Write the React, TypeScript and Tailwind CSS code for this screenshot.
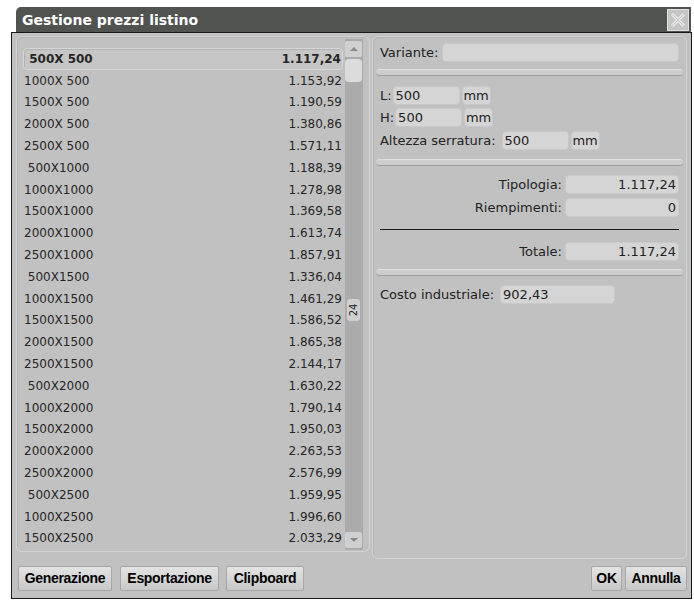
import React from 'react';

const rows: [string, string][] = [
  [' 500X 500', '1.117,24'],
  ['1000X 500', '1.153,92'],
  ['1500X 500', '1.190,59'],
  ['2000X 500', '1.380,86'],
  ['2500X 500', '1.571,11'],
  [' 500X1000', '1.188,39'],
  ['1000X1000', '1.278,98'],
  ['1500X1000', '1.369,58'],
  ['2000X1000', '1.613,74'],
  ['2500X1000', '1.857,91'],
  [' 500X1500', '1.336,04'],
  ['1000X1500', '1.461,29'],
  ['1500X1500', '1.586,52'],
  ['2000X1500', '1.865,38'],
  ['2500X1500', '2.144,17'],
  [' 500X2000', '1.630,22'],
  ['1000X2000', '1.790,14'],
  ['1500X2000', '1.950,03'],
  ['2000X2000', '2.263,53'],
  ['2500X2000', '2.576,99'],
  [' 500X2500', '1.959,95'],
  ['1000X2500', '1.996,60'],
  ['1500X2500', '2.033,29'],
];

function Field({ className = '', children }: { className?: string; children?: React.ReactNode }) {
  return (
    <div className={`h-[19px] rounded-[4px] bg-[#d5d5d5] border border-[#c9c9c9] flex items-center px-[2px] text-[12px] text-[#222] ${className}`}>
      {children}
    </div>
  );
}

function Separator() {
  return (
    <div className="h-[7px] mx-[3px] rounded-full bg-[#cdcdcd] border-t border-[#e0e0e0] border-b border-b-[#9e9e9e]" />
  );
}

function Button({ label, className = '' }: { label: string; className?: string }) {
  return (
    <div
      className={`h-[25px] flex items-center justify-center rounded-[2px] border border-[#a8a8a8] bg-gradient-to-b from-[#e4e4e4] to-[#c8c8c8] text-[14px] font-bold text-black tracking-[-0.3px] ${className}`}
      style={{ fontFamily: '"Liberation Sans", Arial, sans-serif' }}
    >
      {label}
    </div>
  );
}

export default function App() {
  return (
    <div
      className="w-[694px] h-[600px] bg-white pt-[7px] overflow-hidden"
      style={{ fontFamily: '"DejaVu Sans", Verdana, sans-serif' }}
    >
      {/* title bar */}
      <div className="ml-[16px] mr-[3px] h-[25px] bg-[#505350] rounded-tl-[5px] flex items-center justify-between pl-[6px] pr-[2px]">
        <span className="text-white font-bold text-[14px] leading-none">Gestione prezzi listino</span>
        <div className="w-[22px] h-[22px] bg-[#c4c4c4] border border-[#e2e2e2] flex items-center justify-center">
          <svg width="16" height="16" viewBox="0 0 16 16">
            <path d="M2 2 L14 14 M14 2 L2 14" stroke="#e6e6e6" strokeWidth="3.2" />
            <path d="M2.6 2.6 L14 14 M14 2 L2 14" stroke="#b0b0b0" strokeWidth="1" opacity="0.6" />
          </svg>
        </div>
      </div>

      {/* window body */}
      <div className="ml-[11px] w-[681px] h-[567px] border-[1.5px] border-[#1a1a1a] bg-[#c1c1c1] flex flex-col px-[4px] pt-[3px]">
        <div className="flex gap-[2px] h-[519px]">
          {/* list panel */}
          <div className="w-[355px] h-[516px] rounded-[6px] border border-[#d3d3d3] shadow-[inset_1px_1px_0_#b4b4b4] flex pl-[6px] pr-[6px] pt-[2px]">
            <div className="flex-1 pt-[9px] pr-[2px]">
              {rows.map(([name, price], i) => (
                <div
                  key={i}
                  className={`h-[21.8px] flex items-center justify-between whitespace-pre text-[12px] text-[#262626] pl-[1px] pr-[1px] ${
                    i === 0 ? 'font-bold text-[#111] rounded-[4px] border border-[#d6d6d6] bg-[#c6c6c6] shadow-[inset_1px_1px_0_#b2b2b2]' : ''
                  }`}
                >
                  <span>{name}</span>
                  <span>{price}</span>
                </div>
              ))}
            </div>
            {/* scrollbar */}
            <div className="w-[18px] h-[511px] bg-[#ababab] flex flex-col items-center py-[1px]">
              <div className="w-[17px] h-[16px] bg-[#d0d0d0] rounded-[2px] flex items-center justify-center mt-[1px]">
                <div className="w-0 h-0 border-l-[4px] border-r-[4px] border-b-[4px] border-l-transparent border-r-transparent border-b-[#8a8a8a]" />
              </div>
              <div className="w-[17px] h-[23px] bg-[#dcdcdc] rounded-[4px] mt-[2px]" />
              <div className="mt-[217px] w-[13px] h-[22px] bg-[#cfcfcf] rounded-[3px] flex items-center justify-center">
                <span className="text-[10px] text-[#222] -rotate-90 leading-none">24</span>
              </div>
              <div className="flex-1" />
              <div className="w-[17px] h-[16px] bg-[#d0d0d0] rounded-[2px] flex items-center justify-center mb-[1px]">
                <div className="w-0 h-0 border-l-[4px] border-r-[4px] border-t-[4px] border-l-transparent border-r-transparent border-t-[#8a8a8a]" />
              </div>
            </div>
          </div>

          {/* right panel */}
          <div className="w-[316px] h-[523px] rounded-[6px] border border-[#d3d3d3] shadow-[inset_1px_1px_0_#b4b4b4] pt-[6px] text-[12px] text-[#222]">
            <div className="flex items-center pl-[7px] pr-[7px] gap-[4px]">
              <span className="text-[13px]">Variante:</span>
              <Field className="flex-1" />
            </div>
            <div className="mt-[6px]">
              <Separator />
            </div>
            <div className="pl-[7px] mt-[10px] flex flex-col gap-[3px] text-[13px]">
              <div className="flex items-center">
                <span>L:</span>
                <Field className="w-[67px] ml-[1px] text-[13px]">500</Field>
                <Field className="w-[29px] ml-[2px] text-[13px] justify-center">mm</Field>
              </div>
              <div className="flex items-center">
                <span>H:</span>
                <Field className="w-[67px] ml-[1px] text-[13px]">500</Field>
                <Field className="w-[29px] ml-[2px] text-[13px] justify-center">mm</Field>
              </div>
              <div className="flex items-center">
                <span>Altezza serratura:</span>
                <Field className="w-[67px] ml-[6px] text-[13px]">500</Field>
                <Field className="w-[29px] ml-[2px] text-[13px] justify-center">mm</Field>
              </div>
            </div>
            <div className="mt-[9px]">
              <Separator />
            </div>
            <div className="mt-[9px] flex flex-col gap-[3px] pr-[7px] text-[13px]">
              <div className="flex items-center justify-end gap-[3px]">
                <span>Tipologia:</span>
                <Field className="w-[114px] justify-end text-[13px]">1.117,24</Field>
              </div>
              <div className="flex items-center justify-end gap-[3px]">
                <span>Riempimenti:</span>
                <Field className="w-[114px] justify-end text-[13px]">0</Field>
              </div>
            </div>
            <div className="mx-[7px] mt-[12px] h-px bg-[#1a1a1a]" />
            <div className="mt-[12px] flex items-center justify-end gap-[3px] pr-[7px] text-[13px]">
              <span>Totale:</span>
              <Field className="w-[114px] justify-end text-[13px]">1.117,24</Field>
            </div>
            <div className="mt-[7px]">
              <Separator />
            </div>
            <div className="mt-[9px] flex items-center pl-[7px] text-[13px]">
              <span>Costo industriale:</span>
              <Field className="w-[115px] ml-[6px] text-[13px]">902,43</Field>
            </div>
          </div>
        </div>

        {/* buttons */}
        <div className="flex items-center mt-[11px] pl-[2px] pr-[0px]">
          <Button label="Generazione" className="w-[94px]" />
          <Button label="Esportazione" className="w-[99px] ml-[8px]" />
          <Button label="Clipboard" className="w-[78px] ml-[7px]" />
          <div className="flex-1" />
          <Button label="OK" className="w-[31px]" />
          <Button label="Annulla" className="w-[62px] ml-[3px]" />
        </div>
      </div>
    </div>
  );
}
